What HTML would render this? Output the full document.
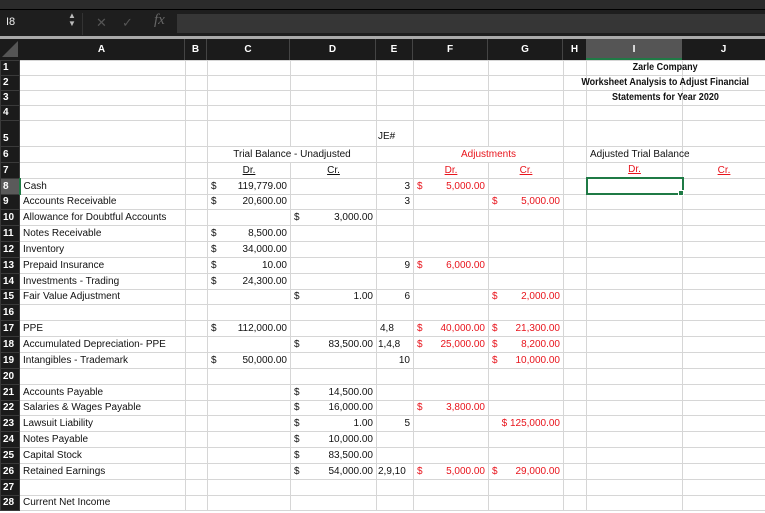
<!DOCTYPE html>
<html><head><meta charset="utf-8"><style>
*{margin:0;padding:0;box-sizing:border-box}
body{width:765px;height:513px;overflow:hidden;background:#fff;font-family:"Liberation Sans",sans-serif;position:relative}
.abs{position:absolute}
table{position:absolute;left:0;top:60px;border-collapse:collapse;table-layout:fixed;width:765px}
td{border:1px solid #d6d6d6;font-size:10px;color:#111;padding:0 3px;white-space:nowrap;overflow:visible;line-height:12px;vertical-align:bottom;padding-bottom:1px}
tr{height:15.85px}
td.h{background:#1b1b1b;color:#fff;font-weight:bold;border:1px solid #3a3a3a;padding:0 2px 1px;font-size:10px}
td.hs{background:#5a5a5a;border-right:2px solid #1f7a45}
.m b{float:left;font-weight:normal}.m i{float:right;font-style:normal}
.r{color:#e8141c}
.rt{text-align:right}
u{text-decoration:underline}
.c{text-align:center}
.t{position:absolute;left:565px;width:200px;text-align:center;font-size:10px;font-weight:bold;white-space:nowrap;color:#111;line-height:15px}
.t span{display:inline-block;transform:scaleX(.9)}
</style></head><body>
<div class="abs" style="left:0;top:0;width:765px;height:10px;background:#2b2b2b;border-bottom:1px solid #000"></div>
<div class="abs" style="left:0;top:10px;width:765px;height:27px;background:#1e1e1e"></div>
<div class="abs" style="left:6px;top:16px;color:#eee;font-size:11px">I8</div>
<div class="abs" style="left:68px;top:12px;color:#bbb;font-size:8px;line-height:8px">▲<br>▼</div>
<div class="abs" style="left:82px;top:13px;width:1px;height:22px;background:#333"></div>
<div class="abs" style="left:96px;top:15px;color:#555;font-size:13px">✕</div>
<div class="abs" style="left:122px;top:15px;color:#555;font-size:13px">✓</div>
<div class="abs" style="left:154px;top:12px;color:#666;font-size:15px;font-family:'Liberation Serif',serif;font-style:italic">fx</div>
<div class="abs" style="left:177px;top:14px;width:588px;height:19px;background:#363636"></div>
<div class="abs" style="left:0;top:36px;width:765px;height:3px;background:#aaa"></div>
<div class="abs" style="left:0;top:39px;width:765px;height:21px;background:#1b1b1b"></div>
<div class="abs" style="left:2px;top:41px;width:0;height:0;border-left:16px solid transparent;border-bottom:16px solid #555"></div>
<div class="abs" style="left:19px;top:39px;height:21px;width:746px;color:#fff;font-size:10px;font-weight:bold;line-height:21px">
<span class="abs c" style="left:0;width:166px;border-right:1px solid #444">A</span>
<span class="abs c" style="left:166px;width:22px;border-right:1px solid #444">B</span>
<span class="abs c" style="left:188px;width:83px;border-right:1px solid #444">C</span>
<span class="abs c" style="left:271px;width:86px;border-right:1px solid #444">D</span>
<span class="abs c" style="left:357px;width:37px;border-right:1px solid #444">E</span>
<span class="abs c" style="left:394px;width:75px;border-right:1px solid #444">F</span>
<span class="abs c" style="left:469px;width:75px;border-right:1px solid #444">G</span>
<span class="abs c" style="left:544px;width:23px">H</span>
<span class="abs c" style="left:567px;width:96px;background:#555;border-bottom:2px solid #1f7a45;height:21px">I</span>
<span class="abs c" style="left:663px;width:83px">J</span>
</div>
<table>
<colgroup><col style="width:19px"><col style="width:166px"><col style="width:22px"><col style="width:83px"><col style="width:86px"><col style="width:37px"><col style="width:75px"><col style="width:75px"><col style="width:23px"><col style="width:96px"><col style="width:83px"></colgroup>
<tr style="height:15px"><td class="h">1</td><td></td><td></td><td></td><td></td><td></td><td></td><td></td><td></td><td></td><td></td></tr>
<tr style="height:15px"><td class="h">2</td><td></td><td></td><td></td><td></td><td></td><td></td><td></td><td></td><td></td><td></td></tr>
<tr style="height:15px"><td class="h">3</td><td></td><td></td><td></td><td></td><td></td><td></td><td></td><td></td><td></td><td></td></tr>
<tr style="height:15px"><td class="h">4</td><td></td><td></td><td></td><td></td><td></td><td></td><td></td><td></td><td></td><td></td></tr>
<tr style="height:26px"><td class="h">5</td><td></td><td></td><td></td><td></td><td style="padding-left:1px;padding-bottom:3px">JE#</td><td></td><td></td><td></td><td></td><td></td></tr>
<tr><td class="h">6</td><td></td><td></td><td colspan="2" class="c">Trial Balance - Unadjusted</td><td></td><td colspan="2" class="c r">Adjustments</td><td></td><td>Adjusted Trial Balance</td><td></td></tr>
<tr><td class="h">7</td><td></td><td></td><td class="c"><u>Dr.</u></td><td class="c"><u>Cr.</u></td><td></td><td class="c r"><u>Dr.</u></td><td class="c r"><u>Cr.</u></td><td></td><td class="c r"><u>Dr.</u></td><td class="c r"><u>Cr.</u></td></tr>
<tr><td class="h hs">8</td><td>Cash</td><td></td><td class="m"><b>$</b><i>119,779.00</i></td><td></td><td class="rt">3</td><td class="m r"><b>$</b><i>5,000.00</i></td><td></td><td></td><td style="border:2px solid #1f7a45"></td><td></td></tr>
<tr><td class="h">9</td><td>Accounts Receivable</td><td></td><td class="m"><b>$</b><i>20,600.00</i></td><td></td><td class="rt">3</td><td></td><td class="m r"><b>$</b><i>5,000.00</i></td><td></td><td></td><td></td></tr>
<tr><td class="h">10</td><td>Allowance for Doubtful Accounts</td><td></td><td></td><td class="m"><b>$</b><i>3,000.00</i></td><td></td><td></td><td></td><td></td><td></td><td></td></tr>
<tr><td class="h">11</td><td>Notes Receivable</td><td></td><td class="m"><b>$</b><i>8,500.00</i></td><td></td><td></td><td></td><td></td><td></td><td></td><td></td></tr>
<tr><td class="h">12</td><td>Inventory</td><td></td><td class="m"><b>$</b><i>34,000.00</i></td><td></td><td></td><td></td><td></td><td></td><td></td><td></td></tr>
<tr><td class="h">13</td><td>Prepaid Insurance</td><td></td><td class="m"><b>$</b><i>10.00</i></td><td></td><td class="rt">9</td><td class="m r"><b>$</b><i>6,000.00</i></td><td></td><td></td><td></td><td></td></tr>
<tr><td class="h">14</td><td>Investments - Trading</td><td></td><td class="m"><b>$</b><i>24,300.00</i></td><td></td><td></td><td></td><td></td><td></td><td></td><td></td></tr>
<tr><td class="h">15</td><td>Fair Value Adjustment</td><td></td><td></td><td class="m"><b>$</b><i>1.00</i></td><td class="rt">6</td><td></td><td class="m r"><b>$</b><i>2,000.00</i></td><td></td><td></td><td></td></tr>
<tr><td class="h">16</td><td></td><td></td><td></td><td></td><td></td><td></td><td></td><td></td><td></td><td></td></tr>
<tr><td class="h">17</td><td>PPE</td><td></td><td class="m"><b>$</b><i>112,000.00</i></td><td></td><td>4,8</td><td class="m r"><b>$</b><i>40,000.00</i></td><td class="m r"><b>$</b><i>21,300.00</i></td><td></td><td></td><td></td></tr>
<tr><td class="h">18</td><td>Accumulated Depreciation- PPE</td><td></td><td></td><td class="m"><b>$</b><i>83,500.00</i></td><td style="padding-left:1px">1,4,8</td><td class="m r"><b>$</b><i>25,000.00</i></td><td class="m r"><b>$</b><i>8,200.00</i></td><td></td><td></td><td></td></tr>
<tr><td class="h">19</td><td>Intangibles - Trademark</td><td></td><td class="m"><b>$</b><i>50,000.00</i></td><td></td><td class="rt">10</td><td></td><td class="m r"><b>$</b><i>10,000.00</i></td><td></td><td></td><td></td></tr>
<tr><td class="h">20</td><td></td><td></td><td></td><td></td><td></td><td></td><td></td><td></td><td></td><td></td></tr>
<tr><td class="h">21</td><td>Accounts Payable</td><td></td><td></td><td class="m"><b>$</b><i>14,500.00</i></td><td></td><td></td><td></td><td></td><td></td><td></td></tr>
<tr><td class="h">22</td><td>Salaries &amp; Wages Payable</td><td></td><td></td><td class="m"><b>$</b><i>16,000.00</i></td><td></td><td class="m r"><b>$</b><i>3,800.00</i></td><td></td><td></td><td></td><td></td></tr>
<tr><td class="h">23</td><td>Lawsuit Liability</td><td></td><td></td><td class="m"><b>$</b><i>1.00</i></td><td class="rt">5</td><td></td><td class="r rt">$ 125,000.00</td><td></td><td></td><td></td></tr>
<tr><td class="h">24</td><td>Notes Payable</td><td></td><td></td><td class="m"><b>$</b><i>10,000.00</i></td><td></td><td></td><td></td><td></td><td></td><td></td></tr>
<tr><td class="h">25</td><td>Capital Stock</td><td></td><td></td><td class="m"><b>$</b><i>83,500.00</i></td><td></td><td></td><td></td><td></td><td></td><td></td></tr>
<tr><td class="h">26</td><td>Retained Earnings</td><td></td><td></td><td class="m"><b>$</b><i>54,000.00</i></td><td style="padding-left:1px">2,9,10</td><td class="m r"><b>$</b><i>5,000.00</i></td><td class="m r"><b>$</b><i>29,000.00</i></td><td></td><td></td><td></td></tr>
<tr><td class="h">27</td><td></td><td></td><td></td><td></td><td></td><td></td><td></td><td></td><td></td><td></td></tr>
<tr><td class="h">28</td><td>Current Net Income</td><td></td><td></td><td></td><td></td><td></td><td></td><td></td><td></td><td></td></tr>
</table>
<div class="t" style="top:60px"><span>Zarle Company</span></div>
<div class="t" style="top:75px"><span>Worksheet Analysis to Adjust Financial</span></div>
<div class="t" style="top:90px"><span>Statements for Year 2020</span></div>
<div class="abs" style="left:678px;top:190px;width:6px;height:6px;background:#1f7a45;border:1px solid #fff"></div>
</body></html>
